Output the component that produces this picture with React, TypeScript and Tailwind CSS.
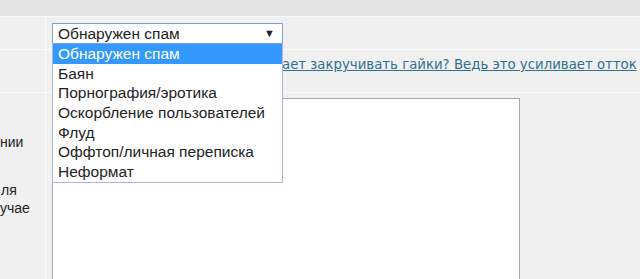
import React from 'react'

const reasons = [
  'Обнаружен спам',
  'Баян',
  'Порнография/эротика',
  'Оскорбление пользователей',
  'Флуд',
  'Оффтоп/личная переписка',
  'Неформат',
]

export default function App() {
  return (
    <div className="w-[640px] h-[279px] overflow-hidden bg-[#f0f0f0] text-[#222] font-['Liberation_Sans',Arial,sans-serif]">
      {/* top band */}
      <div className="h-[17px] bg-[#e4e4e4] border-b border-[#fafafa]" />

      {/* row: select */}
      <div className="flex h-[33px] border-b border-[#fafafa]">
        <div className="w-[46px] shrink-0 border-r border-[#fafafa]" />
        <div className="pl-[6px] pt-[6px]">
          <div className="relative">
            <div className="w-[231px] h-[21px] bg-white border border-[#7da2ce] flex items-center justify-between pl-[5px] pr-[7px] text-[15.5px] leading-none">
              <span>Обнаружен спам</span>
              <span className="text-[11px]">▼</span>
            </div>
            <ul className="absolute left-0 top-[21px] z-10 w-[231px] bg-white border border-[#a9b8cc] border-t-0 text-[15.5px]">
              {reasons.map((r, i) => (
                <li
                  key={r}
                  className={`h-[19.7px] leading-[19.7px] pl-[5px] ${i === 0 ? 'bg-[#3399ff] text-white' : ''}`}
                >
                  {r}
                </li>
              ))}
            </ul>
          </div>
        </div>
      </div>

      {/* row: link */}
      <div className="flex h-[43px] border-b border-[#fafafa]">
        <div className="w-[46px] shrink-0 border-r border-[#fafafa]" />
        <div className="pl-[236px] pt-[5px] whitespace-nowrap font-['DejaVu_Sans',Verdana,sans-serif] text-[13.3px]">
          <a href="#" className="underline text-[#2f6f8c]">
            ает закручивать гайки? Ведь это усиливает отток
          </a>
        </div>
      </div>

      {/* row: textarea */}
      <div className="flex h-[200px]">
        <div className="w-[46px] shrink-0 border-r border-[#fafafa] text-[14px] leading-[18px] text-[#222]">
          <div className="pt-[40px]">нии</div>
          <div className="pt-[30px] pl-[1px]">ля</div>
          <div>учае</div>
        </div>
        <div className="pl-[6px] pt-[5px]">
          <textarea className="w-[468px] h-[200px] bg-white border border-[#a9a9a9] resize-none outline-none" />
        </div>
      </div>
    </div>
  )
}
